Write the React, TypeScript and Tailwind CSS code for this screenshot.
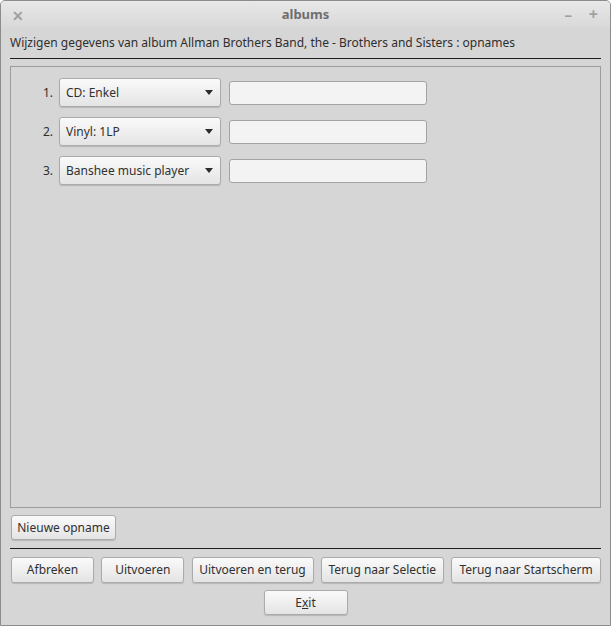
import React from "react";

const face =
  "rounded-[3px] border border-[#ababab] bg-gradient-to-b from-[#fafafa] to-[#e4e4e4] text-[12px] text-[#303030] shadow-[0_1px_1px_rgba(0,0,0,0.15)]";
const btn = `flex items-center justify-center ${face}`;

const rows = [
  { n: "1.", label: "CD: Enkel" },
  { n: "2.", label: "Vinyl: 1LP" },
  { n: "3.", label: "Banshee music player" },
];

const Combo = ({ label }: { label: string }) => (
  <div className={`flex h-[29px] w-[162px] items-center justify-between pl-[6px] pr-[7px] ${face}`}>
    <span>{label}</span>
    <svg width="8" height="5" viewBox="0 0 8 5">
      <path d="M0 0 H8 L4 5 Z" fill="#2b2b2b" />
    </svg>
  </div>
);

const App = () => {
  return (
    <div
      className="flex h-[626px] w-[611px] flex-col overflow-hidden rounded-t-[5px] border border-[#8c8c8c] bg-[#d6d6d6] text-[#2e2e2e]"
      style={{ fontFamily: '"Noto Sans", "Open Sans", sans-serif' }}
    >
      <div className="relative flex h-[27px] shrink-0 items-center justify-center bg-gradient-to-b from-[#e8e8e8] to-[#d8d8d8]">
        <span className="absolute left-[11px] top-[4px] text-[14px] font-bold text-[#a0a0a0]">✕</span>
        <span className="text-[13px] font-bold text-[#6e6e6e]">albums</span>
        <span className="absolute right-[38px] top-[2px] text-[15px] font-bold text-[#a0a0a0]">–</span>
        <span className="absolute right-[12px] top-[1px] text-[16px] font-bold text-[#a0a0a0]">+</span>
      </div>

      <div className="flex flex-col px-[9px]">
        <div className="h-[30px] text-[12px] leading-[30px]">
          Wijzigen gegevens van album Allman Brothers Band, the - Brothers and Sisters : opnames
        </div>
        <div className="h-px bg-[#1e1e1e]" />

        <div className="mt-[7px] flex h-[442px] flex-col gap-[10px] border border-[#9c9c9c] pt-[11px]">
          {rows.map((r) => (
            <div key={r.n} className="flex items-center">
              <span className="w-[42px] text-right text-[12px]">{r.n}</span>
              <div className="ml-[6px]">
                <Combo label={r.label} />
              </div>
              <div className="ml-[8px] h-[24px] w-[198px] rounded-[3px] border border-[#a3a3a3] bg-[#f3f3f3]" />
            </div>
          ))}
        </div>

        <div className="mt-[7px] pl-px">
          <div className={`${btn} h-[25px] w-[105px]`}>Nieuwe opname</div>
        </div>

        <div className="mt-[8px] h-px bg-[#1e1e1e]" />

        <div className="mt-[8px] flex justify-between pl-px">
          <div className={`${btn} h-[26px] w-[83px]`}>Afbreken</div>
          <div className={`${btn} h-[26px] w-[83px]`}>Uitvoeren</div>
          <div className={`${btn} h-[26px] w-[122px]`}>Uitvoeren en terug</div>
          <div className={`${btn} h-[26px] w-[123px]`}>Terug naar Selectie</div>
          <div className={`${btn} h-[26px] w-[150px]`}>Terug naar Startscherm</div>
        </div>

        <div className="mt-[7px] flex justify-center">
          <div className={`${btn} h-[25px] w-[84px]`}>
            <span>
              E<span className="underline">x</span>it
            </span>
          </div>
        </div>
      </div>
    </div>
  );
};

export default App;
